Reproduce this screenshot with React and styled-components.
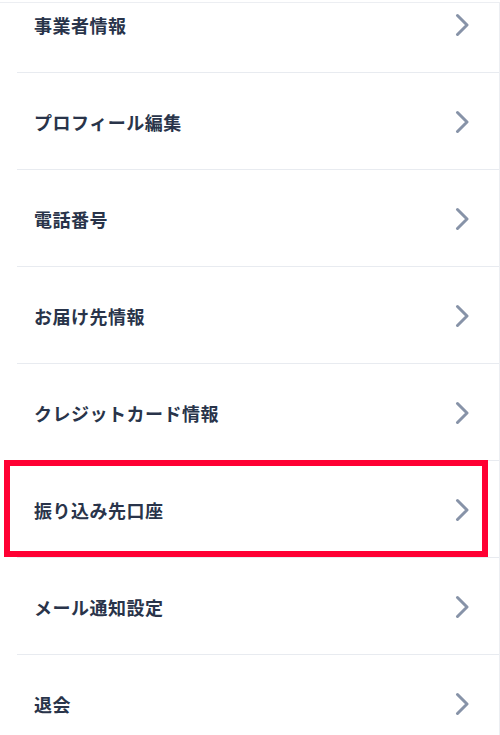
import React from 'react';
import styled, { createGlobalStyle } from 'styled-components';

const GlobalStyle = createGlobalStyle`
  html, body {
    margin: 0;
    padding: 0;
    background: #ffffff;
  }
  body {
    font-family: "Noto Sans CJK JP", "Noto Sans", sans-serif;
  }
`;

const Panel = styled.div`
  width: 499px;
  height: 733px;
  margin-top: 2px;
  border-top: 1px solid #eceef2;
  border-right: 1px solid #eceef2;
  overflow: hidden;
`;

const MenuList = styled.ul`
  list-style: none;
  margin: -27px 0 0 0;
  padding: 0;
`;

const MenuRow = styled.li`
  position: relative;
  box-sizing: border-box;
  height: 97px;
  margin-left: 17px;
  padding: 1px 30px 0 17px;
  display: flex;
  align-items: center;
  justify-content: space-between;
  border-bottom: 1px solid #e8ebf0;
`;

const Label = styled.span`
  font-size: 18px;
  font-weight: 700;
  letter-spacing: 0.5px;
  color: #29344a;
`;

const Highlight = styled.div`
  position: absolute;
  left: -13px;
  top: -1px;
  width: 484px;
  height: 97px;
  box-sizing: border-box;
  border: 6px solid #ff0033;
  pointer-events: none;
`;

const Chevron = () => (
  <svg width="14" height="24" viewBox="0 0 14 24" fill="none">
    <path
      d="M2.5 2.5 L12 12 L2.5 21.5"
      stroke="#8793a8"
      strokeWidth="3"
      strokeLinecap="round"
      strokeLinejoin="round"
    />
  </svg>
);

const items = [
  '事業者情報',
  'プロフィール編集',
  '電話番号',
  'お届け先情報',
  'クレジットカード情報',
  '振り込み先口座',
  'メール通知設定',
  '退会',
];

export default function App() {
  return (
    <>
      <GlobalStyle />
      <Panel>
        <MenuList>
          {items.map((label) => (
            <MenuRow key={label}>
              <Label>{label}</Label>
              <Chevron />
              {label === '振り込み先口座' && <Highlight />}
            </MenuRow>
          ))}
        </MenuList>
      </Panel>
    </>
  );
}
